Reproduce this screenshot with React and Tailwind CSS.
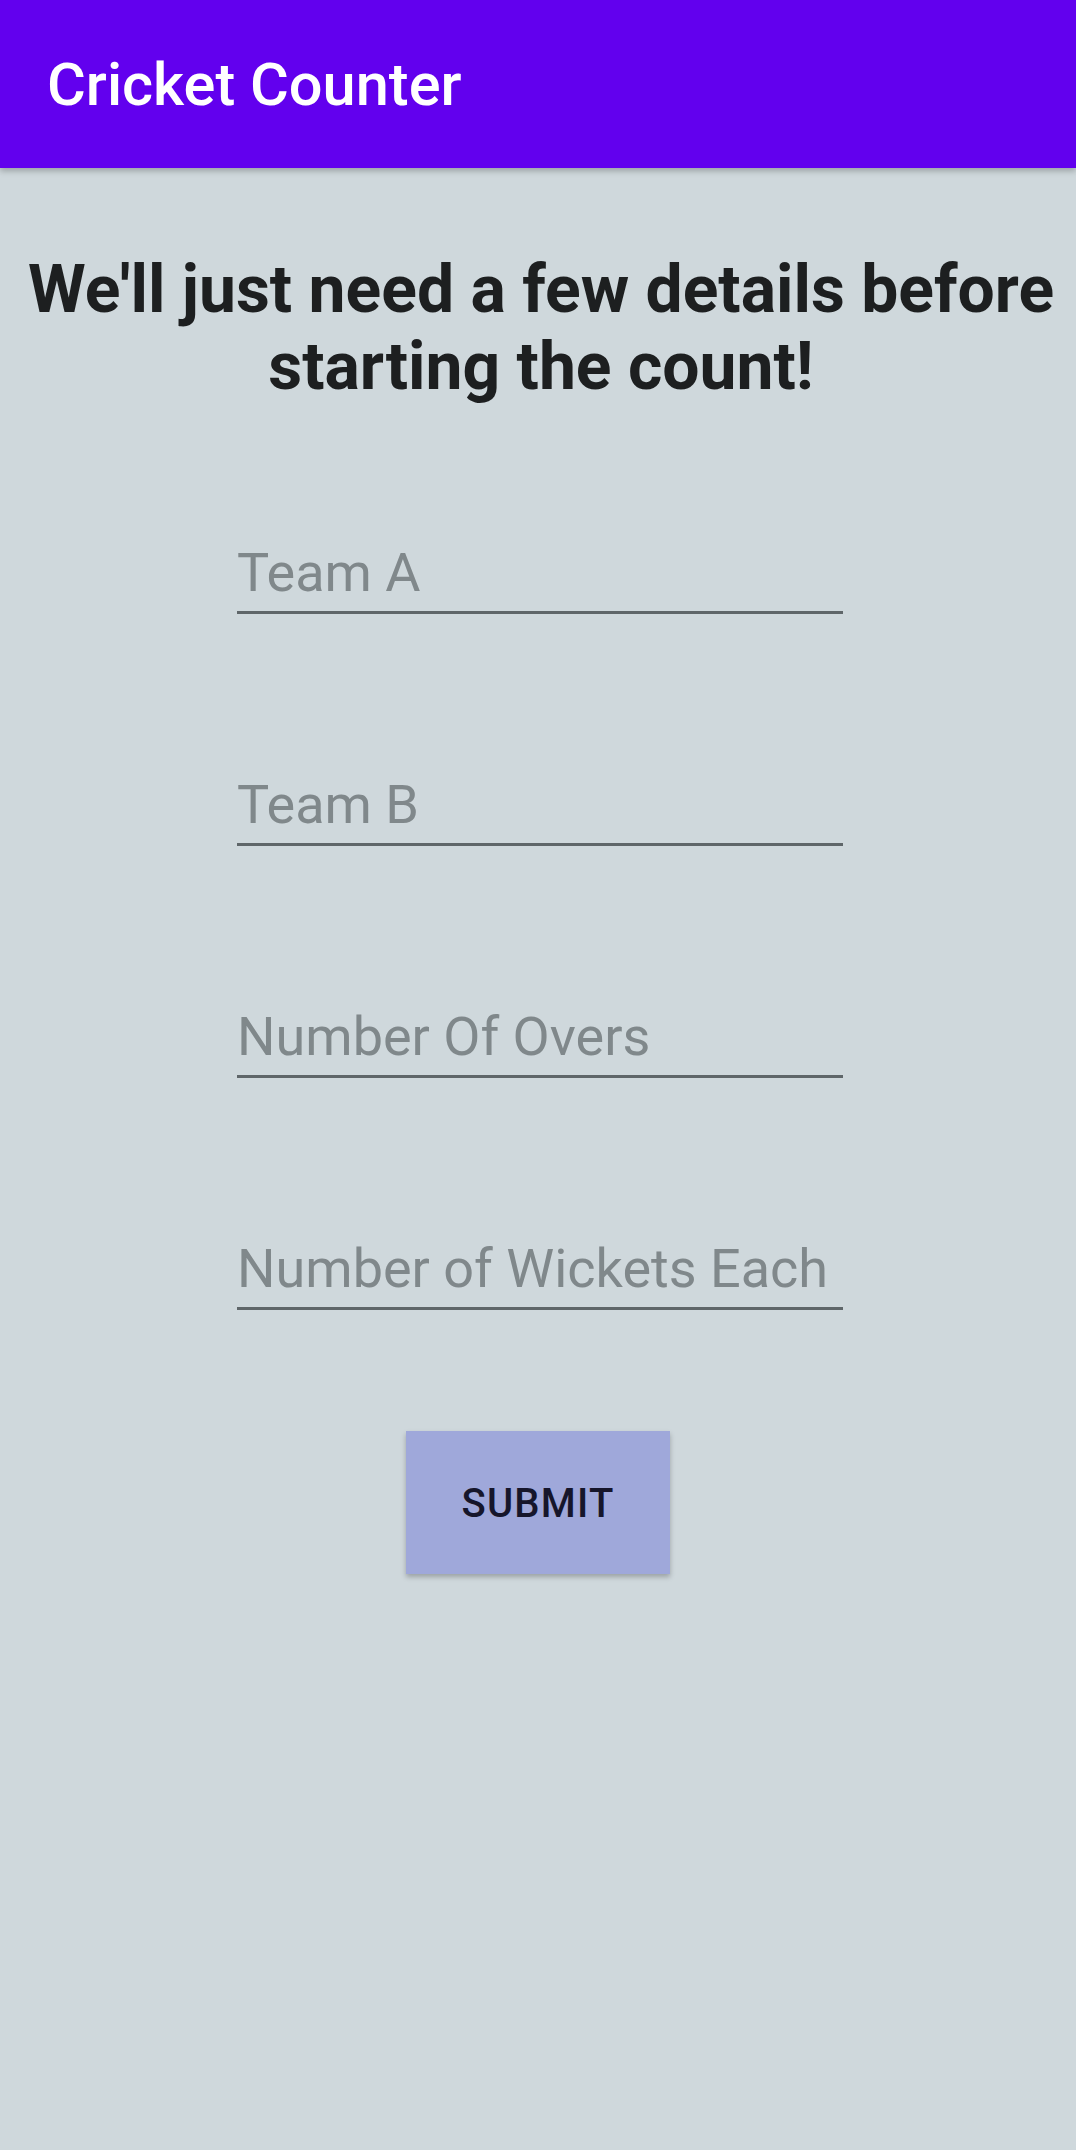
import React from 'react';

const fields = ['Team A', 'Team B', 'Number Of Overs', 'Number of Wickets Each'];

const App = () => {
   return (
      <div className="min-h-[2150px] w-[1076px] bg-[#cfd8dc] font-['Roboto',sans-serif]">
         {/* Toolbar */}
         <div className="relative z-10 h-[168px] bg-[#6200ee] shadow-[0_3px_6px_rgba(0,0,0,0.25)] flex items-center pl-[47px]">
            <h1 className="text-white text-[59.5px] font-medium leading-none mt-[3px]">Cricket Counter</h1>
         </div>

         <div className="flex flex-col items-center">
            <h2 className="mt-[83px] text-center text-[66px] leading-[77px] font-bold text-[#1d1f20] pl-[8px] pr-[2px]">
               We'll just need a few details before starting the count!
            </h2>

            <div className="mt-[137px] flex flex-col gap-[160px] ml-[4px]">
               {fields.map(label => (
                  <div key={label} className="w-[606px] border-b-[3px] border-[#5f6669] pb-[8px]">
                     <input
                        type="text"
                        placeholder={label}
                        className="w-full bg-transparent outline-none text-[54px] leading-[61px] h-[61px] text-[#1d1f20] placeholder:text-[#80888b]"
                     />
                  </div>
               ))}
            </div>

            <button className="mt-[121px] w-[264px] h-[143px] bg-[#9fa8da] text-[#16162b] text-[40px] font-medium tracking-[0.03em] uppercase shadow-[0_3px_5px_rgba(0,0,0,0.25)] pt-[3px]">
               Submit
            </button>
         </div>
      </div>
   );
};

export default App;
